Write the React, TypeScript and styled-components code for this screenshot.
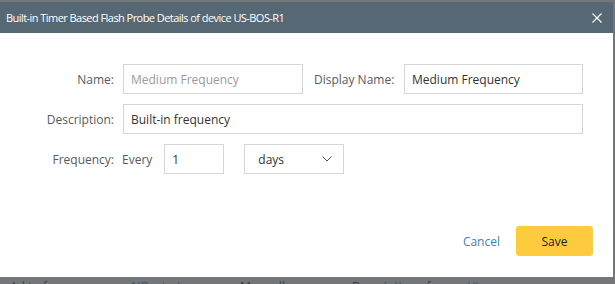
import React, { useState } from "react";
import styled, { createGlobalStyle } from "styled-components";

const COLORS = {
  header: "#566874",
  backdrop: "#767b7f",
  label: "#555b60",
  border: "#d6d6d6",
  text: "#333",
  muted: "#9a9a9a",
  link: "#3d80c1",
  save: "#fecb3e",
};

const GlobalStyle = createGlobalStyle`
  html, body {
    margin: 0;
    padding: 0;
    background: ${COLORS.backdrop};
    font-family: "Open Sans", "Noto Sans", sans-serif;
  }
`;

const Page = styled.div`
  position: relative;
  width: 615px;
  height: 284px;
  overflow: hidden;
  background: #f3f3f3;
`;

// the page content sitting behind the modal, only its top edge shows
const BehindRow = styled.div`
  position: absolute;
  top: 280px;
  left: 10px;
  display: flex;
  font-size: 12px;
  line-height: 14px;
  color: #333;
`;

const BehindCell = styled.span<{ $w: number; $link?: boolean }>`
  width: ${(p) => p.$w}px;
  color: ${(p) => (p.$link ? COLORS.link : "#333")};
`;

const Overlay = styled.div`
  position: absolute;
  inset: 0;
  background: rgba(60, 66, 70, 0.7);
`;

const Dialog = styled.div`
  position: absolute;
  top: 2px;
  left: 0;
  width: 613px;
  height: 275px;
  background: #fff;
  display: flex;
  flex-direction: column;
`;

const Header = styled.div`
  height: 31px;
  background: ${COLORS.header};
  display: flex;
  align-items: center;
  justify-content: space-between;
  padding: 0 10px 0 6px;
`;

const Title = styled.span`
  color: #fff;
  font-size: 11px;
  letter-spacing: -0.55px;
`;

const CloseButton = styled.button`
  border: 0;
  background: none;
  padding: 0;
  width: 12px;
  height: 12px;
  cursor: pointer;
  display: flex;
`;

const Body = styled.div`
  flex: 1;
  display: flex;
  flex-direction: column;
  gap: 10px;
  padding: 31px 0 0 8px;
`;

const Row = styled.div`
  display: flex;
  align-items: center;
  height: 30px;
`;

const Label = styled.label<{ $w?: number }>`
  width: ${(p) => p.$w ?? 106}px;
  text-align: right;
  font-size: 12px;
  color: ${COLORS.label};
  margin-right: ${(p) => (p.$w ? 10 : 9)}px;
  white-space: nowrap;
`;

const Inline = styled.span`
  font-size: 12px;
  color: ${COLORS.label};
  margin: 0 12px 0 -2px;
`;

const Input = styled.input<{ $w: number; $muted?: boolean }>`
  box-sizing: border-box;
  width: ${(p) => p.$w}px;
  height: 30px;
  border: 1px solid ${COLORS.border};
  border-radius: 0;
  padding: 0 7px;
  font-family: inherit;
  font-size: 12px;
  color: ${(p) => (p.$muted ? COLORS.muted : COLORS.text)};
  background: #fff;
  outline: none;
`;

const Spacer = styled.div<{ $w: number }>`
  width: ${(p) => p.$w}px;
`;

const Select = styled.div`
  box-sizing: border-box;
  width: 100px;
  height: 30px;
  margin-left: 20px;
  border: 1px solid ${COLORS.border};
  display: flex;
  align-items: center;
  justify-content: space-between;
  padding: 0 11px 0 13px;
  font-size: 12px;
  color: ${COLORS.text};
`;

const Footer = styled.div`
  display: flex;
  justify-content: flex-end;
  align-items: center;
  gap: 16px;
  padding: 0 20px 21px 0;
`;

const LinkButton = styled.button`
  border: 0;
  background: none;
  font-family: inherit;
  font-size: 12px;
  color: ${COLORS.link};
  padding: 0;
  cursor: pointer;
`;

const SaveButton = styled.button`
  width: 77px;
  height: 30px;
  border: 0;
  border-radius: 3px;
  background: ${COLORS.save};
  font-family: inherit;
  font-size: 12px;
  color: #222;
  cursor: pointer;
`;

export default function App() {
  const [displayName, setDisplayName] = useState("Medium Frequency");
  const [description, setDescription] = useState("Built-in frequency");
  const [every, setEvery] = useState("1");

  return (
    <Page>
      <GlobalStyle />
      <BehindRow>
        <BehindCell $w={120}>Ad to f</BehindCell>
        <BehindCell $w={110} $link>1(Device)</BehindCell>
        <BehindCell $w={112}>Manually</BehindCell>
        <BehindCell $w={116}>Description of</BehindCell>
        <BehindCell $w={40} $link>Vi</BehindCell>
      </BehindRow>
      <Overlay />
      <Dialog>
        <Header>
          <Title>Built-in Timer Based Flash Probe Details of device US-BOS-R1</Title>
          <CloseButton aria-label="Close">
            <svg width="12" height="12" viewBox="0 0 12 12">
              <path d="M1.5 1.5 L10.5 10.5 M10.5 1.5 L1.5 10.5" stroke="#fff" strokeWidth="1.2" />
            </svg>
          </CloseButton>
        </Header>
        <Body>
          <Row>
            <Label>Name:</Label>
            <Input $w={180} $muted value="Medium Frequency" readOnly />
            <Spacer $w={11} />
            <Label $w={80}>Display Name:</Label>
            <Input $w={179} value={displayName} onChange={(e) => setDisplayName(e.target.value)} />
          </Row>
          <Row>
            <Label>Description:</Label>
            <Input $w={460} value={description} onChange={(e) => setDescription(e.target.value)} />
          </Row>
          <Row>
            <Label $w={106}>Frequency:</Label>
            <Inline>Every</Inline>
            <Input $w={60} value={every} onChange={(e) => setEvery(e.target.value)} />
            <Select>
              <span>days</span>
              <svg width="10" height="6" viewBox="0 0 10 6">
                <path d="M0.5 0.5 L5 5 L9.5 0.5" fill="none" stroke="#555" strokeWidth="1" />
              </svg>
            </Select>
          </Row>
        </Body>
        <Footer>
          <LinkButton>Cancel</LinkButton>
          <SaveButton>Save</SaveButton>
        </Footer>
      </Dialog>
    </Page>
  );
}
